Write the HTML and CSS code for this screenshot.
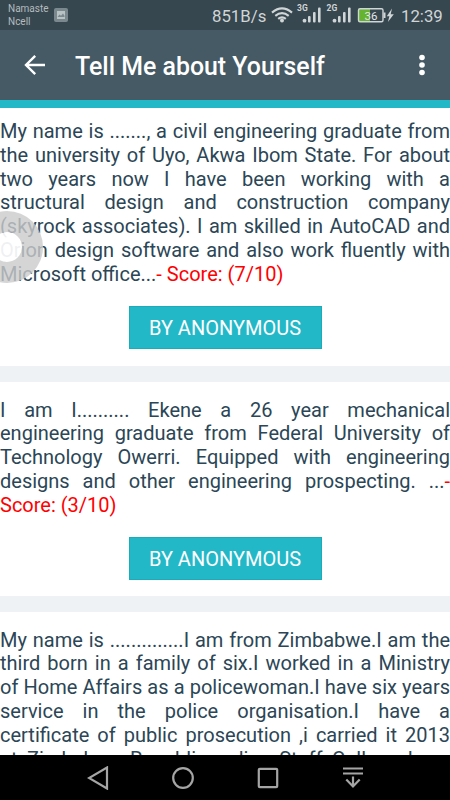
FILE: index.html
```html
<!DOCTYPE html>
<html lang="en">
<head>
  <meta charset="UTF-8" />
  <meta name="viewport" content="width=device-width, initial-scale=1.0" />
  <title>Tell Me about Yourself</title>
  <link rel="stylesheet" href="styles.css">
</head>
<body>
  <div class="statusbar">
    <div class="carrier">Namaste<br>Ncell</div>
    <svg class="photo" width="14" height="14" viewBox="0 0 14 14">
      <rect width="14" height="14" rx="2" fill="#7b898f"/>
      <path d="M3 3h8v8H3z" fill="#b9c2c5"/>
      <path d="M3.5 9l2-2.5 1.5 1.2L9 5.5l1.5 2.2V9z" fill="#7b898f"/>
    </svg>
    <span class="speed">851B/s</span>
    <svg class="signals" width="124" height="24" viewBox="0 0 124 24">
      <g fill="none" stroke="#d0d5d7" stroke-width="2.1">
        <path d="M1 12.6Q11 4.2 21 12.6"/>
        <path d="M4.3 15.9Q11 10.5 17.7 15.9"/>
        <path d="M7.2 18.9Q11 15.8 14.8 18.9"/>
      </g>
      <circle cx="11" cy="20.6" r="2" fill="#d0d5d7"/>
      <g fill="#d0d5d7">
        <text class="net" x="26" y="11">3G</text>
        <circle cx="33.5" cy="20.7" r="1.9"/>
        <rect x="37" y="16" width="2.6" height="6.5" rx="1"/>
        <rect x="42" y="12" width="2.6" height="10.5" rx="1"/>
        <rect x="47" y="7.5" width="2.6" height="15" rx="1"/>
        <text class="net" x="55.5" y="11">2G</text>
        <circle cx="63.5" cy="20.7" r="1.9"/>
        <rect x="67" y="16" width="2.6" height="6.5" rx="1"/>
        <rect x="72" y="12" width="2.6" height="10.5" rx="1"/>
        <rect x="77" y="7.5" width="2.6" height="15" rx="1"/>
      </g>
      <rect x="88" y="9" width="11" height="12.5" fill="#65b32e"/>
      <rect x="87.5" y="8.7" width="24.5" height="13" rx="1.5" fill="none" stroke="#d0d5d7" stroke-width="1.4"/>
      <path d="M113.5 12.5v5.5" stroke="#d0d5d7" stroke-width="2"/>
      <text class="battery" x="93.5" y="19.5">36</text>
      <path d="M121 8.5l-5.2 7.7h2.6l-1.5 5.8 5.9-7.7h-3.1z" fill="#d0d5d7"/>
    </svg>
    <span class="clock">12:39</span>
  </div>

  <div class="toolbar">
    <svg class="back" width="22" height="22" viewBox="0 0 22 22">
      <path d="M21 11H2.5M11.2 1.8L2 11l9.2 9.2" fill="none" stroke="#fff" stroke-width="2.4"/>
    </svg>
    <h1>Tell Me about Yourself</h1>
    <svg class="more" width="6" height="22" viewBox="0 0 6 22">
      <circle cx="3" cy="3.5" r="2.8"/>
      <circle cx="3" cy="11" r="2.8"/>
      <circle cx="3" cy="18.5" r="2.8"/>
    </svg>
  </div>

  <div class="answers">
    <div class="card first">
      <p>My name is ......., a civil engineering graduate from the university of Uyo, Akwa Ibom State. For about two years now I have been working with a structural design and construction company (skyrock associates). I am skilled in AutoCAD and Orion design software and also work fluently with Microsoft office...<span class="score">- Score: (7/10)</span></p>
      <button>BY ANONYMOUS</button>
    </div>
    <div class="card">
      <p>I am I.......... Ekene a 26 year mechanical engineering graduate from Federal University of Technology Owerri. Equipped with engineering designs and other engineering prospecting. ...<span class="score">- Score: (3/10)</span></p>
      <button>BY ANONYMOUS</button>
    </div>
    <div class="card last">
      <p>My name is ..............I am from Zimbabwe.I am the third born in a family of six.I worked in a Ministry of Home Affairs as a policewoman.I have six years service in the police organisation.I have a certificate of public prosecution ,i carried it 2013 at Zimbabwe Republic police Staff College have</p>
    </div>
    <div class="touch"></div>
  </div>

  <div class="navbar">
    <svg width="22" height="24" viewBox="0 0 22 24"><path d="M20 1.5v21L2 12z"/></svg>
    <svg width="22" height="24" viewBox="0 0 22 24"><circle cx="11" cy="12" r="9.8"/></svg>
    <svg width="22" height="24" viewBox="0 0 22 24"><rect x="1.8" y="2.8" width="18.4" height="18.4" rx="1"/></svg>
    <svg width="22" height="24" viewBox="0 0 22 24"><path d="M1 2.5h20M1 7.5h20M11 10.5v10M4.3 13.5l6.7 7 6.7-7"/></svg>
  </div>
</body>
</html>
```
FILE: styles.css
```css
body {
  margin: 0;
  height: 100vh;
  display: flex;
  flex-direction: column;
  overflow: hidden;
  background: #fff;
  font-family: Roboto, sans-serif;
}
.statusbar {
  height: 30px;
  flex: none;
  display: flex;
  align-items: center;
  background: #37474f;
  color: #d0d5d7;
}
.carrier {
  width: 45px;
  padding-left: 8px;
  font-size: 10px;
  line-height: 13.5px;
  color: #b3bbbe;
}
.photo {
  margin-left: 1px;
}
.speed {
  width: 53px;
  margin: 2px 0 0 144px;
  font-size: 16.8px;
}
.signals {
  align-self: flex-start;
  margin-left: 6px;
  flex: none;
}
.net {
  font-size: 8.5px;
  font-weight: 700;
}
.battery {
  font-size: 11.5px;
  fill: #e4e8e9;
}
.clock {
  margin: 2px 0 0 6px;
  font-size: 16.8px;
}
.toolbar {
  height: 70px;
  flex: none;
  display: flex;
  align-items: center;
  background: #455a64;
  border-bottom: 8px solid #22b8c8;
  color: #fff;
}
.back {
  margin-left: 24px;
}
.toolbar h1 {
  flex: 1;
  margin: 2px 0 0 29px;
  font-size: 24.9px;
  font-weight: 500;
}
.more {
  margin-right: 25px;
  fill: #fff;
}
.answers {
  position: relative;
  flex: 1;
  min-height: 0;
  overflow: hidden;
}
.card {
  padding: 17px 0 16px;
  border-bottom: 16px solid #eef2f5;
  text-align: center;
}
.card.first {
  padding: 12px 0 17px;
}
.card p {
  margin: 0 0 19px;
  font-size: 20px;
  line-height: 23.8px;
  text-align: justify;
  color: #2b4656;
}
.card.last p {
  text-align-last: justify;
}
.card .score {
  color: #f00;
}
.card button {
  display: block;
  width: 193px;
  height: 43px;
  margin: 0 auto;
  padding: 2px 0 0;
  border: 1px solid #1cabbb;
  background: #22b8c8;
  color: #fff;
  font-family: inherit;
  font-size: 20px;
}
.touch {
  position: absolute;
  left: -29px;
  top: 103px;
  width: 30px;
  height: 30px;
  border: 21px solid rgba(203, 203, 203, 0.8);
  border-radius: 50%;
  background: rgba(255, 255, 255, 0.92);
  background-clip: padding-box;
}
.navbar {
  height: 45px;
  flex: none;
  display: flex;
  align-items: center;
  justify-content: center;
  gap: 63px;
  background: #000;
}
.navbar svg {
  fill: none;
  stroke: #a5a5a5;
  stroke-width: 2.2;
}
```
